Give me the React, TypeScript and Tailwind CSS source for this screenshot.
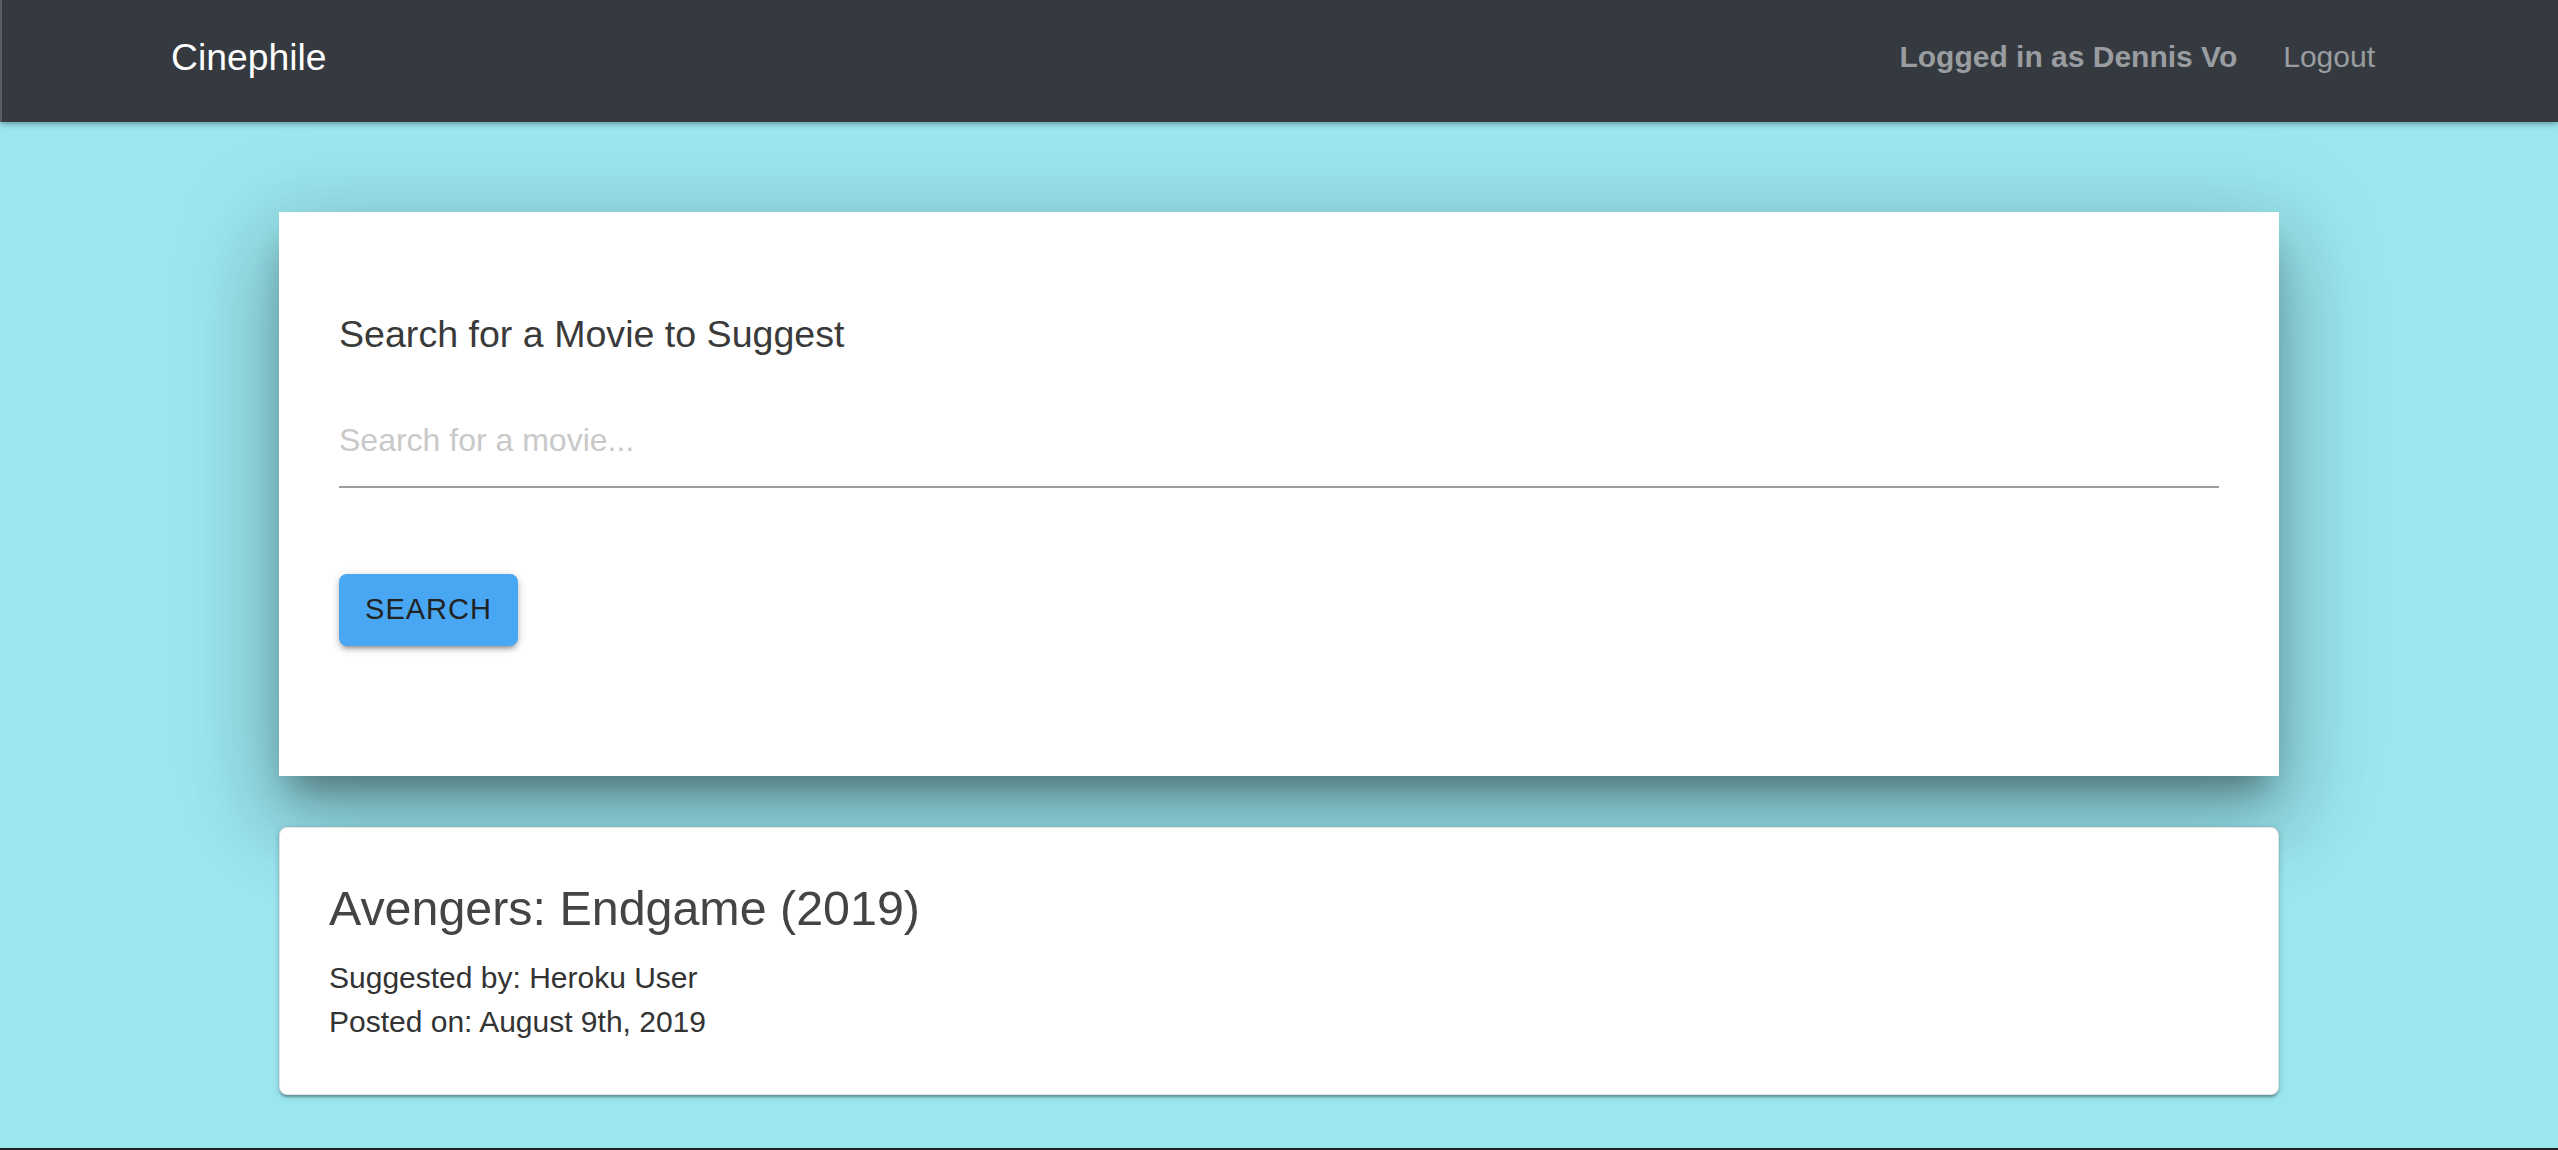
const Navbar = () => {
  return (
    <nav className="h-[122px] bg-[#343a40] border-l-2 border-[#5a5d62] shadow-[0_2px_6px_rgba(0,0,0,0.35)] relative z-10 flex items-center justify-between pl-[169px] pr-[183px] pb-[8px]">
      <span className="text-white text-[37.3px] leading-[44px]">Cinephile</span>
      <div className="flex items-center gap-[46px]">
        <span className="text-[#9a9da0] text-[30px] leading-[40px] font-bold">
          Logged in as Dennis Vo
        </span>
        <span className="text-[#9a9da0] text-[30px] leading-[40px]">Logout</span>
      </div>
    </nav>
  );
};

const SearchCard = () => {
  return (
    <div className="bg-white px-[60px] pt-[100px] pb-[130px] shadow-[0_22px_30px_-12px_rgba(0,0,0,0.32),0_48px_76px_6px_rgba(0,0,0,0.18),0_18px_92px_16px_rgba(0,0,0,0.14)]">
      <h2 className="text-[37.6px] leading-[44px] text-[#3a3a3a]">
        Search for a Movie to Suggest
      </h2>
      <div className="mt-[64px] border-b-2 border-[#9e9e9e]">
        <input
          type="text"
          placeholder="Search for a movie..."
          className="w-full text-[32px] leading-[40px] pb-[26px] outline-none text-[#333] placeholder:text-[#c9c9c9] bg-transparent"
        />
      </div>
      <button className="mt-[86px] w-[179px] h-[72px] rounded-[8px] bg-[#48a6f2] text-[#222] text-[29px] tracking-[1px] uppercase shadow-[0_2px_10px_rgba(0,0,0,0.2),0_4px_4px_rgba(0,0,0,0.14),0_6px_2px_-4px_rgba(0,0,0,0.12)]">
        Search
      </button>
    </div>
  );
};

const suggestions = [
  {
    title: "Avengers: Endgame (2019)",
    user: "Heroku User",
    date: "August 9th, 2019",
  },
];

const SuggestionCard = ({ movie }: any) => {
  return (
    <div className="relative bg-white rounded-[8px] border border-[#e2e2e2] px-[49px] pt-[52px] pb-[50px] shadow-[0_2px_6px_rgba(0,0,0,0.2),0_2px_2px_rgba(0,0,0,0.14),0_4px_2px_-2px_rgba(0,0,0,0.12)]">
      <h3 className="text-[48.4px] leading-[56px] text-[#444]">{movie.title}</h3>
      <div className="mt-[20px] text-[30px] leading-[44px] text-[#333]">
        <p>Suggested by: {movie.user}</p>
        <p>Posted on: {movie.date}</p>
      </div>
    </div>
  );
};

export default function App() {
  return (
    <div className="h-[1150px] flex flex-col bg-[#9be7f0] font-['Liberation_Sans',Arial,sans-serif] border-b-2 border-[#1e1e1e] overflow-hidden">
      <Navbar />
      <main className="flex-1 w-[2000px] mx-auto pt-[90px] flex flex-col gap-[51px]">
        <SearchCard />
        {suggestions.map((movie, index) => (
          <SuggestionCard key={index} movie={movie} />
        ))}
      </main>
    </div>
  );
}
